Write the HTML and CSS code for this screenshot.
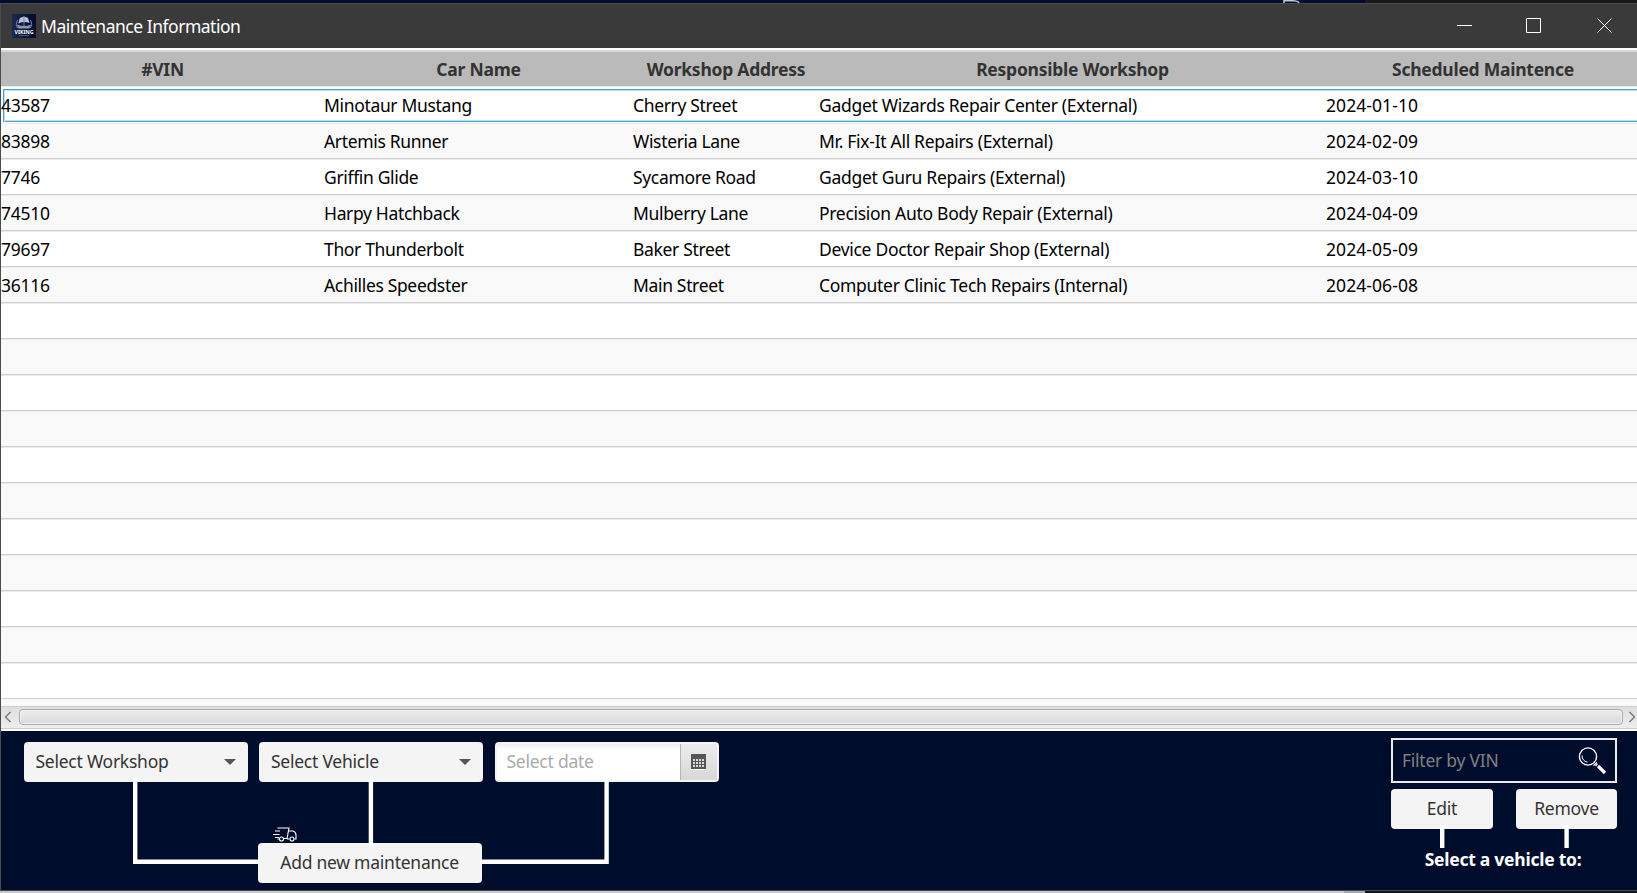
FILE: index.html
```html
<!DOCTYPE html>
<html lang="en">
<head>
<meta charset="utf-8">
<title>Maintenance Information</title>
<link rel="stylesheet" href="styles.css">
</head>
<body>
<div class="backdrop-top"><svg class="peek" width="20" height="3" viewBox="0 0 20 3"><path d="M1 3V.8H10Q15 .8 16 3" fill="none" stroke="#c4c8d0" stroke-width="1.5"/></svg></div>
<div class="window">
  <header class="titlebar">
    <svg class="logo" width="24" height="24" viewBox="0 0 24 24">
      <defs><linearGradient id="navy" x2="1"><stop stop-color="#1b2950"/><stop offset=".6" stop-color="#0a1538"/><stop offset="1" stop-color="#020b2b"/></linearGradient></defs>
      <rect width="24" height="24" fill="url(#navy)"/>
      <path d="M7.500 4.500Q11 1.500 16 4L17.500 9Q12 7 6.500 9.500Z" fill="#b7c3d5"/>
      <path d="M12 2v10M5.500 6Q3 11 5.500 14M18.500 6Q21 11 18.500 14" stroke="#7787a6" fill="none"/>
      <path d="M5 10.500Q12 13.500 19 10.500L17.500 14.500H6.500Z" fill="#8797b2"/>
      <path d="M7 21.700h10" stroke="#61708e" stroke-width=".8"/>
      <text x="2.500" y="20" textLength="19" lengthAdjust="spacingAndGlyphs" class="logo-text">VIKING</text>
    </svg>
    <h1 class="title">Maintenance Information</h1>
    <svg class="controls" width="156" height="16" viewBox="0 0 156 16" fill="none" stroke="#fff">
      <path d="M0 7.500h15M69.500.5h14v14h-14zM140.500.5l14 14M154.500.5l-14 14"/>
    </svg>
  </header>
  <main class="table">
    <div class="row head"><span>#VIN</span><span>Car Name</span><span>Workshop Address</span><span>Responsible Workshop</span><span>Scheduled Maintence</span></div>
    <div class="row focused"><span>43587</span><span>Minotaur Mustang</span><span>Cherry Street</span><span>Gadget Wizards Repair Center (External)</span><span>2024-01-10</span></div>
    <div class="row"><span>83898</span><span>Artemis Runner</span><span>Wisteria Lane</span><span>Mr. Fix-It All Repairs (External)</span><span>2024-02-09</span></div>
    <div class="row"><span>7746</span><span>Griffin Glide</span><span>Sycamore Road</span><span>Gadget Guru Repairs (External)</span><span>2024-03-10</span></div>
    <div class="row"><span>74510</span><span>Harpy Hatchback</span><span>Mulberry Lane</span><span>Precision Auto Body Repair (External)</span><span>2024-04-09</span></div>
    <div class="row"><span>79697</span><span>Thor Thunderbolt</span><span>Baker Street</span><span>Device Doctor Repair Shop (External)</span><span>2024-05-09</span></div>
    <div class="row"><span>36116</span><span>Achilles Speedster</span><span>Main Street</span><span>Computer Clinic Tech Repairs (Internal)</span><span>2024-06-08</span></div>
    <div class="row"></div><div class="row"></div><div class="row"></div><div class="row"></div>
    <div class="row"></div><div class="row"></div><div class="row"></div><div class="row"></div>
    <div class="row"></div><div class="row"></div><div class="row"></div>
    <div class="sliver"></div>
    <div class="scrollbar">
      <svg width="8" height="12" viewBox="0 0 8 12"><path d="M6.500 1L1.500 6L6.500 11" fill="none" stroke="#777" stroke-width="1.400"/></svg>
      <div class="thumb"></div>
      <svg width="8" height="12" viewBox="0 0 8 12"><path d="M1.500 1L6.500 6L1.500 11" fill="none" stroke="#777" stroke-width="1.400"/></svg>
    </div>
  </main>
  <footer class="panel">
    <section class="create">
      <div class="fields">
        <div class="combo"><span>Select Workshop</span><i class="arrow"></i></div>
        <div class="combo"><span>Select Vehicle</span><i class="arrow"></i></div>
        <div class="date"><span class="date-text">Select date</span>
          <span class="date-button"><svg width="15" height="16" viewBox="0 0 15 16"><path d="M0 0h15v15H0z" fill="#555"/><path d="M0 15.500h15" stroke="#fff"/><path d="M2 6h11M2 9h11M2 12h11" stroke="#d9d9d9" stroke-width="2" stroke-dasharray="2 1"/></svg></span>
        </div>
      </div>
      <svg class="truck" width="24" height="15" viewBox="0 0 24 15" fill="none" stroke="#fff" stroke-width="1.100">
        <path d="M4.500 1H16L14 11.500H11M15.500 4H20Q23 5 23 8V12H21.500M16.500 12H14M6.500 12H4.500M2 4H7M0 7.500H6.500M2 10.500H6"/><circle cx="8.500" cy="12" r="2"/><circle cx="19" cy="12" r="2"/>
      </svg>
      <div class="button add">Add new maintenance</div>
    </section>
    <section class="actions">
      <div class="filter"><span>Filter by VIN</span>
        <svg width="29" height="28" viewBox="0 0 29 28" fill="none" stroke="#fff"><circle cx="10" cy="9.500" r="8.600" stroke-width="1.400"/><path d="M4 8.500Q4 14 9.500 15.200" /><path d="M15.500 18.500L19 15.500M17.500 19L19.500 17" stroke-width="1.200"/><path d="M20 19L27 26" stroke-width="3.200"/></svg>
      </div>
      <div class="pair"><div class="button edit">Edit</div><div class="button remove">Remove</div></div>
      <div class="hint">Select a vehicle to:</div>
    </section>
    <svg class="links" width="1636" height="159" viewBox="1 731 1636 159" fill="none" stroke="#fff" stroke-width="4.400">
      <path d="M135.200 778V861.800H259M370.900 778V846M606.600 778V861.800H480M1442.200 825V848M1566.600 825V848"/>
    </svg>
  </footer>
</div>
<div class="backdrop-bottom"></div>
</body>
</html>
```
FILE: styles.css
```css
* { box-sizing: border-box; }
body {
  margin: 0;
  width: 1637px;
  height: 893px;
  overflow: hidden;
  font: 17.5px/24px "Noto Sans", "Open Sans", sans-serif;
  letter-spacing: -0.25px;
  white-space: nowrap;
}
.backdrop-top {
  height: 3px;
  padding-left: 1283px;
  background: linear-gradient(90deg, #000c2c 1365px, #191919 1365px);
}
.peek { display: block; }
.window {
  height: 888px;
  border: 1px solid #4b4b4b;
  border-right: 0;
}
.titlebar {
  display: flex;
  align-items: center;
  height: 44px;
  padding: 0 24px 0 11px;
  background: #3a3a3a;
  color: #fff;
}
.logo { margin-right: 5px; }
.logo-text { font: bold 6px/6px "Noto Sans", sans-serif; letter-spacing: 0; fill: #fff; }
.title { flex: 1; margin: 0; font-size: 17.5px; font-weight: 400; letter-spacing: -0.48px; }
.table { height: 683px; overflow: hidden; background: #fff; }
.row {
  display: grid;
  grid-template-columns: 323px 309px 186px 507px 314px;
  height: 36px;
  padding-top: 6px;
  border-bottom: 1px solid #cfcfcf;
  box-shadow: inset 0 1px #ededed;
  background: #fff;
  color: #000;
}
.row:nth-child(odd) { background: #f9f9f9; }
.row span:nth-child(2), .row span:nth-child(3) { letter-spacing: -0.34px; }
.row span:nth-child(4) { letter-spacing: -0.3px; }
.row span:nth-child(5) { letter-spacing: 0.07px; }
.row.head {
  height: 39px;
  padding-top: 7px;
  border-top: 2px solid #fff;
  border-bottom: 1px solid #e8e8e8;
  box-shadow: inset 0 2px #d8d8d8;
  background: #bababa;
  color: #333;
  font-weight: 700;
  text-align: center;
}
.row.head span { letter-spacing: -0.25px; }
.row.focused {
  margin-left: 1px;
  padding-top: 3px;
  border: 1px solid #fff;
  border-width: 2px 0 1px 1px;
  box-shadow: inset 1px 1px #3ca7d0, inset 2px 2px #b9e2f0, inset 0 -1px #3ca7d0, inset 0 -2px #b9e2f0;
}
.row.focused span { margin-left: -2px; padding-top: 1px; }
.sliver { height: 7px; background: #f9f9f9; }
.scrollbar {
  display: flex;
  align-items: center;
  gap: 5px;
  height: 23px;
  padding: 0 1px 2px 3px;
  border: 1px solid #cecece;
  border-width: 1px 0;
  background: linear-gradient(#dedede, #eee);
}
.thumb {
  flex: 1;
  height: 16px;
  margin-left: 2px;
  border: 1px solid #aaa;
  border-radius: 4px;
  background: linear-gradient(#ededed, #d9d9d9);
  box-shadow: inset 0 0 0 1px #f3f3f3;
}
.panel {
  display: flex;
  justify-content: space-between;
  position: relative;
  height: 159px;
  padding: 7px 20px 0 22.5px;
  background: #000c2c;
  color: #333;
}
.create { padding-top: 4px; }
.fields { display: flex; gap: 11.5px; }
.combo, .date, .button {
  height: 40px;
  border-radius: 4px;
  background: #f4f4f4;
}
.combo {
  display: flex;
  align-items: center;
  justify-content: space-between;
  width: 224px;
  padding: 0 12px;
}
.combo span, .filter span { padding-bottom: 2px; }
.arrow {
  border: 6px solid transparent;
  border-top-color: #555;
  border-bottom: 0;
}
.date {
  display: flex;
  width: 224px;
  padding: 2px;
  overflow: hidden;
}
.date-text {
  flex: 1;
  padding: 5px 10px 7px;
  background: linear-gradient(#eee, #fff 6px);
  color: #aaa;
}
.date-button {
  display: grid;
  place-items: center;
  width: 37px;
  border-left: 1px solid #b5b5b5;
  background: linear-gradient(#ececec, #d8d8d8);
}
.truck { display: block; margin: 45px 0 1px 249px; }
.button { padding-top: 7px; text-align: center; }
.add { width: 224px; margin-left: 234px; }
.filter {
  display: flex;
  align-items: center;
  justify-content: space-between;
  width: 226px;
  height: 45px;
  padding: 0 8px 0 9px;
  border: 2px solid #e8eaee;
  color: #808080;
}
.pair { display: flex; justify-content: space-between; margin-top: 6px; }
.edit { width: 102px; }
.remove { width: 101px; }
.hint {
  margin-top: 18px;
  padding-right: 2px;
  color: #fff;
  font-weight: 700;
  text-align: center;
}
.links { position: absolute; left: 0; top: 0; }
.backdrop-bottom {
  height: 2px;
  background: linear-gradient(90deg, #c8c6c6 1344px, #aaa 1344px, #aaa 1365px, #151515 1365px);
}
```
